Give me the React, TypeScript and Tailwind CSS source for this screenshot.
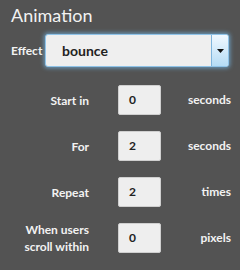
import React from "react";

const rows = [
  { label: ["Start in"], value: "0", unit: "seconds" },
  { label: ["For"], value: "2", unit: "seconds" },
  { label: ["Repeat"], value: "2", unit: "times" },
  { label: ["When users", "scroll within"], value: "0", unit: "pixels" },
];

export default function App() {
  return (
    <div
      className="w-[240px] h-[270px] bg-[#535353] text-[#f2f2f2] overflow-hidden"
      style={{ fontFamily: "Lato, 'Open Sans', sans-serif" }}
    >
      <div className="pl-[11px] pt-[3px] text-[18px] leading-[24px]">Animation</div>
      <div className="flex items-center mt-[7px]">
        <div className="pl-[11px] w-[45px] text-[12px] font-bold">Effect</div>
        <div className="flex w-[184px] h-[33px] rounded-[3px] border border-[#8fc3e8] bg-[#efefef] shadow-[0_0_4px_1px_rgba(120,190,240,0.7)] overflow-hidden">
          <div className="flex-1 flex items-center pl-[16px] text-[14px] font-bold text-[#222]">bounce</div>
          <div className="w-[17px] border-l border-[#7fb5dd] bg-gradient-to-b from-[#f0f8ff] to-[#b5dcf5] flex items-center justify-center">
            <svg width="7" height="4" viewBox="0 0 7 4"><path d="M0 0h7L3.5 4z" fill="#111" /></svg>
          </div>
        </div>
      </div>
      <div className="flex flex-col gap-[16px] mt-[18px]">
        {rows.map((r, i) => (
          <div key={i} className="flex items-center h-[30px]">
            <div className="w-[89px] text-right text-[12px] font-bold leading-[17px]">
              {r.label.map((l, j) => (
                <div key={j}>{l}</div>
              ))}
            </div>
            <div className="ml-[29px] w-[43px] h-[30px] bg-[#eeeeee] border border-[#cfcfcf] rounded-[2px] flex items-center pl-[10px] text-[12px] font-bold text-[#222]">
              {r.value}
            </div>
            <div className="w-[70px] text-right text-[12px] font-bold">{r.unit}</div>
          </div>
        ))}
      </div>
    </div>
  );
}
